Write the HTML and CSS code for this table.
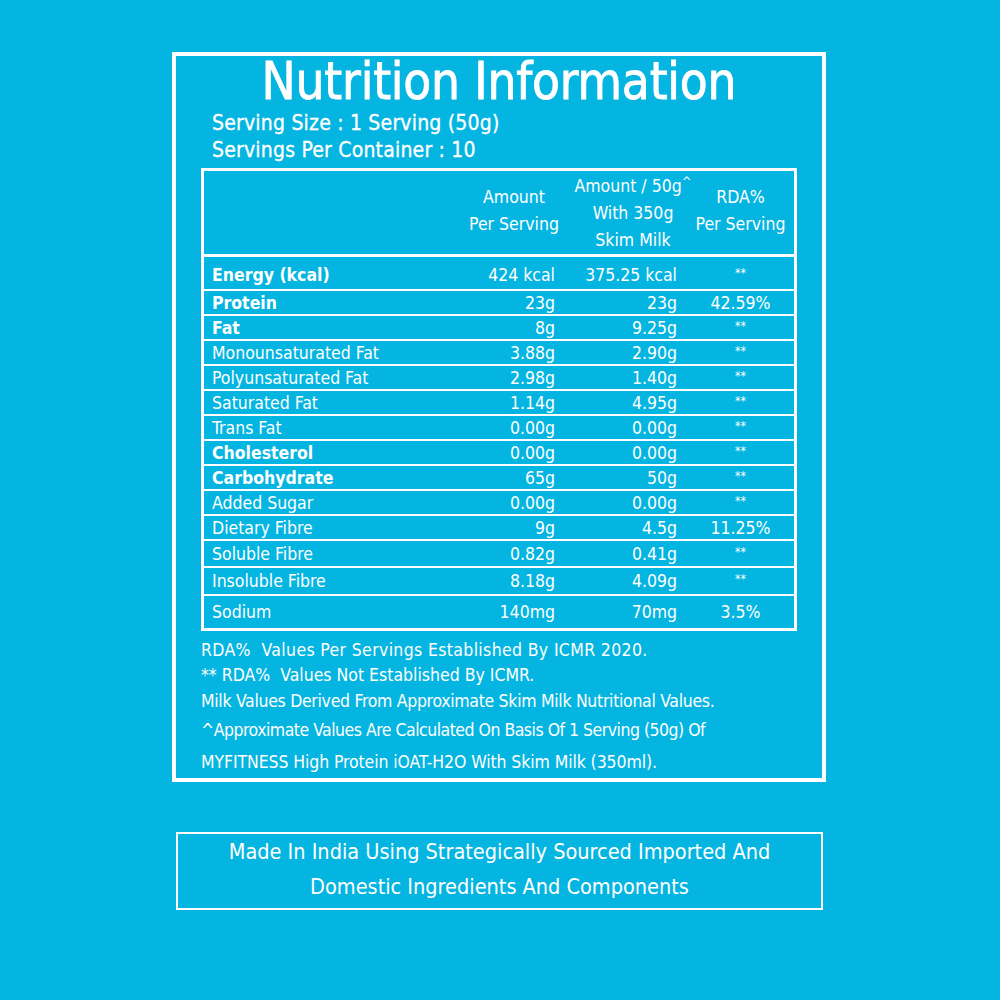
FILE: index.html
```html
<!DOCTYPE html>
<html>
<head>
<meta charset="utf-8">
<link rel="stylesheet" href="styles.css">
</head>
<body>
<div class="page">
  <div class="panel">
    <h1 class="title">Nutrition Information</h1>
    <div class="serving">Serving Size : 1 Serving (50g)</div>
    <div class="serving">Servings Per Container : 10</div>
    <div class="facts">
      <div class="head">
        <div class="hcell"></div>
        <div class="hcell h1"><span>Amount</span><span>Per Serving</span></div>
        <div class="hcell h2"><span>Amount / 50g<sup>^</sup></span><span>With 350g</span><span>Skim Milk</span></div>
        <div class="hcell h3"><span>RDA%</span><span>Per Serving</span></div>
      </div>
      <div class="row r-energy"><div class="lbl b">Energy (kcal)</div><div class="v">424 kcal</div><div class="v">375.25 kcal</div><div class="rda star">**</div></div>
      <div class="row"><div class="lbl b">Protein</div><div class="v">23g</div><div class="v">23g</div><div class="rda">42.59%</div></div>
      <div class="row"><div class="lbl b">Fat</div><div class="v">8g</div><div class="v">9.25g</div><div class="rda star">**</div></div>
      <div class="row"><div class="lbl">Monounsaturated Fat</div><div class="v">3.88g</div><div class="v">2.90g</div><div class="rda star">**</div></div>
      <div class="row"><div class="lbl">Polyunsaturated Fat</div><div class="v">2.98g</div><div class="v">1.40g</div><div class="rda star">**</div></div>
      <div class="row"><div class="lbl">Saturated Fat</div><div class="v">1.14g</div><div class="v">4.95g</div><div class="rda star">**</div></div>
      <div class="row"><div class="lbl">Trans Fat</div><div class="v">0.00g</div><div class="v">0.00g</div><div class="rda star">**</div></div>
      <div class="row"><div class="lbl b">Cholesterol</div><div class="v">0.00g</div><div class="v">0.00g</div><div class="rda star">**</div></div>
      <div class="row"><div class="lbl b">Carbohydrate</div><div class="v">65g</div><div class="v">50g</div><div class="rda star">**</div></div>
      <div class="row"><div class="lbl">Added Sugar</div><div class="v">0.00g</div><div class="v">0.00g</div><div class="rda star">**</div></div>
      <div class="row"><div class="lbl">Dietary Fibre</div><div class="v">9g</div><div class="v">4.5g</div><div class="rda">11.25%</div></div>
      <div class="row r-tall"><div class="lbl">Soluble Fibre</div><div class="v">0.82g</div><div class="v">0.41g</div><div class="rda star">**</div></div>
      <div class="row r-tall2"><div class="lbl">Insoluble Fibre</div><div class="v">8.18g</div><div class="v">4.09g</div><div class="rda star">**</div></div>
      <div class="row r-last"><div class="lbl">Sodium</div><div class="v">140mg</div><div class="v">70mg</div><div class="rda">3.5%</div></div>
    </div>
    <div class="notes">
      <p class="n1">RDA%&nbsp; Values Per Servings Established By ICMR 2020.</p>
      <p class="n2">** RDA%&nbsp; Values Not Established By ICMR.</p>
      <p class="n3">Milk Values Derived From Approximate Skim Milk Nutritional Values.</p>
      <p class="n4">^Approximate Values Are Calculated On Basis Of 1 Serving (50g) Of</p>
      <p class="n5">MYFITNESS High Protein iOAT-H2O With Skim Milk (350ml).</p>
    </div>
  </div>
  <div class="made">
    <p>Made In India Using Strategically Sourced Imported And</p>
    <p>Domestic Ingredients And Components</p>
  </div>
</div>
</body>
</html>
```

FILE: styles.css
```css
* { box-sizing: border-box; }
html, body { margin: 0; padding: 0; }
body {
  background: #04b5e1;
  color: #ffffff;
  font-family: "DejaVu Sans Condensed", "Liberation Sans Narrow", "DejaVu Sans", sans-serif;
  font-stretch: condensed;
  width: 1000px;
  height: 1000px;
  overflow: hidden;
}
.page { padding-top: 52px; }
.panel {
  margin-left: 172px;
  width: 654px;
  height: 730px;
  border: 4px solid #ffffff;
}
.title {
  margin: 0;
  height: 50px;
  line-height: 52px;
  font-size: 50.8px;
  font-weight: normal;
  text-align: center;
  letter-spacing: -0.2px;
  -webkit-text-stroke: 0.8px #ffffff;
}
.serving {
  padding-left: 36px;
  font-size: 21px;
  line-height: 27px;
  letter-spacing: 0.2px;
  -webkit-text-stroke: 0.3px #ffffff;
}
.title + .serving { margin-top: 4px; }
.facts {
  margin-top: 4px;
  margin-left: 25px;
  width: 596px;
  border: 3px solid #ffffff;
}
.head, .row {
  display: grid;
  grid-template-columns: 241px 120px 122px 107px;
}
.head {
  height: 86px;
  border-bottom: 3px solid #ffffff;
  font-size: 17.5px;
}
.hcell {
  display: flex;
  flex-direction: column;
  align-items: center;
  justify-content: center;
  line-height: 27px;
  white-space: nowrap;
}
.h1 { padding-left: 18px; padding-bottom: 3px; }
.h2 { padding-left: 14px; padding-top: 2px; }
.h3 { padding-bottom: 3px; }
.h2 sup { font-size: 13px; line-height: 0; vertical-align: 6px; }
.row {
  height: 25px;
  border-bottom: 2px solid #ffffff;
  align-items: center;
  font-size: 17.5px;
}
.r-energy { height: 34px; padding-top: 4px; }
.r-tall { height: 27px; }
.r-tall2 { height: 28px; }
.r-last { height: 32px; border-bottom: none; }
.lbl { padding-left: 8px; white-space: nowrap; }
.lbl.b { font-weight: bold; }
.v { text-align: right; padding-right: 10px; white-space: nowrap; }
.rda { text-align: center; }
.rda.star { font-size: 12px; padding-bottom: 4px; }
.notes { padding-left: 25px; font-size: 17.5px; }
.notes p { margin: 0; line-height: 25px; letter-spacing: -0.1px; white-space: nowrap; }
.notes .n1 { margin-top: 7px; letter-spacing: 0.35px; }
.notes .n2 { letter-spacing: 0px; }
.notes .n3 { margin-top: 1px; letter-spacing: -0.3px; }
.notes .n4 { margin-top: 4px; letter-spacing: -0.5px; }
.notes .n5 { margin-top: 7px; }
.made {
  margin-top: 50px;
  margin-left: 176px;
  width: 647px;
  height: 78px;
  border: 2px solid #ffffff;
  text-align: center;
  font-size: 21.5px;
}
.made p { margin: 0; line-height: 35px; }
```
